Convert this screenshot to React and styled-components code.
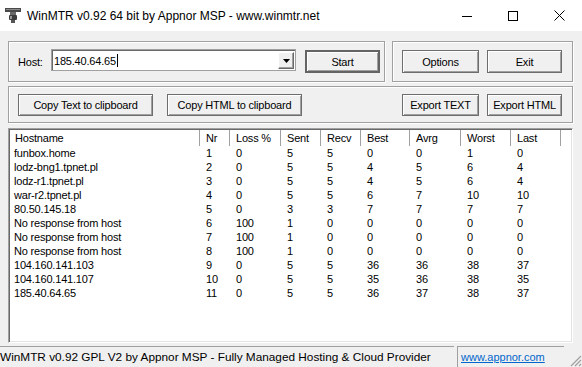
import React from 'react'
import styled, { createGlobalStyle } from 'styled-components'

const GlobalStyle = createGlobalStyle`
  html, body {
    margin: 0;
    padding: 0;
    background: #f0f0f0;
  }
  body {
    font-family: "Liberation Sans", Arial, sans-serif;
    font-size: 11px;
    letter-spacing: -0.2px;
    color: #000;
  }
`

const COLS = '190px 30px 51px 40px 40px 49px 51px 50px 50px 1fr'

const Window = styled.div`
  width: 582px;
  height: 367px;
  display: flex;
  flex-direction: column;
  background: #f0f0f0;
  overflow: hidden;
`

const TitleBar = styled.div`
  height: 31px;
  flex-shrink: 0;
  background: #fff;
  display: flex;
  align-items: center;
`

const AppIcon = styled.svg`
  margin: 0 6px 2px 5px;
  flex-shrink: 0;
`

const Title = styled.div`
  flex: 1;
  font-family: "Liberation Sans", Arial, sans-serif;
  font-size: 12px;
  letter-spacing: 0;
  color: #000;
`

const CaptionButton = styled.div`
  width: 46px;
  height: 31px;
  display: flex;
  align-items: center;
  justify-content: center;
`

const Body = styled.div`
  display: flex;
  flex-direction: column;
  padding: 10px 9px 0 8px;
`

const Row = styled.div`
  display: flex;
  margin-top: ${p => p.$gap || 0}px;
`

const GroupBox = styled.div`
  box-sizing: border-box;
  width: ${p => p.$width}px;
  height: ${p => p.$height}px;
  margin-left: ${p => p.$offset || 0}px;
  padding: ${p => p.$pad || '0'};
  border: 1px solid #a0a0a0;
  box-shadow: inset 1px 1px 0 #fff, 1px 1px 0 #fff;
  display: flex;
  align-items: center;
`

const Label = styled.span`
  width: 33px;
  flex-shrink: 0;
`

const Combo = styled.div`
  box-sizing: border-box;
  width: 245px;
  height: 22px;
  margin-top: -3px;
  border: 1px solid #a0a0a0;
  box-shadow: inset 1px 1px 0 #696969;
  background: #fff;
  display: flex;
  align-items: stretch;
  padding: 2px 1px 1px 2px;
`

const ComboText = styled.div`
  flex: 1;
  display: flex;
  align-items: center;
`

const Caret = styled.span`
  display: inline-block;
  width: 1px;
  height: 13px;
  background: #000;
  margin-left: 1px;
`

const ComboArrow = styled.div`
  box-sizing: border-box;
  width: 16px;
  background: #f0f0f0;
  border: 1px solid;
  border-color: #fff #696969 #696969 #fff;
  box-shadow: inset -1px -1px 0 #a0a0a0;
  display: flex;
  align-items: center;
  justify-content: center;
`

const Button = styled.div`
  box-sizing: border-box;
  width: ${p => p.$width}px;
  height: ${p => p.$height || 23}px;
  margin-left: ${p => p.$offset || 0}px;
  border: ${p => (p.$default ? '2px solid #646464' : '1px solid #6d6d6d')};
  box-shadow: inset 1px 1px 0 #fff, inset -1px -1px 0 #a0a0a0;
  background: #f0f0f0;
  display: flex;
  align-items: center;
  justify-content: center;
  white-space: nowrap;
`

const Spacer = styled.div`
  flex: 1;
`

const ListView = styled.div`
  box-sizing: border-box;
  width: 565px;
  height: 215px;
  margin-top: 5px;
  border: 1px solid;
  border-color: #a0a0a0 #fff #fff #a0a0a0;
  box-shadow: inset 1px 1px 0 #696969, inset -1px -1px 0 #e3e3e3;
  background: #fff;
  padding: 1px;
  overflow: hidden;
`

const HeaderRow = styled.div`
  display: grid;
  grid-template-columns: ${COLS};
  height: 16px;
`

const HeaderCell = styled.div`
  display: flex;
  align-items: center;
  padding-left: ${p => (p.$first ? 5 : 6)}px;
  border-right: ${p => (p.$last ? 'none' : '1px solid #a0a0a0')};
  white-space: nowrap;
  overflow: hidden;
`

const DataRow = styled.div`
  display: grid;
  grid-template-columns: ${COLS};
  height: 14px;
  line-height: 14px;
`

const Cell = styled.div`
  padding-left: ${p => (p.$first ? 4 : 6)}px;
  white-space: nowrap;
  overflow: hidden;
`

const StatusBar = styled.div`
  margin-top: 3px;
  height: 21px;
  display: flex;
  font-family: "Liberation Sans", Arial, sans-serif;
  font-size: 11.8px;
  letter-spacing: 0;
`

const StatusPanel = styled.div`
  box-sizing: border-box;
  width: ${p => p.$width}px;
  margin-left: ${p => p.$offset || 0}px;
  padding-left: ${p => p.$pad || 0}px;
  border-top: 1px solid #a0a0a0;
  border-left: 1px solid #a0a0a0;
  display: flex;
  align-items: center;
  white-space: nowrap;
  overflow: hidden;
`

const Link = styled.span`
  color: #0066cc;
  font-size: 11px;
  text-decoration: underline;
`

const Grip = styled.svg`
  align-self: flex-end;
  margin-left: auto;
`

const columns = ['Hostname', 'Nr', 'Loss %', 'Sent', 'Recv', 'Best', 'Avrg', 'Worst', 'Last']

const rows = [
  ['funbox.home', 1, 0, 5, 5, 0, 0, 1, 0],
  ['lodz-bng1.tpnet.pl', 2, 0, 5, 5, 4, 5, 6, 4],
  ['lodz-r1.tpnet.pl', 3, 0, 5, 5, 4, 5, 6, 4],
  ['war-r2.tpnet.pl', 4, 0, 5, 5, 6, 7, 10, 10],
  ['80.50.145.18', 5, 0, 3, 3, 7, 7, 7, 7],
  ['No response from host', 6, 100, 1, 0, 0, 0, 0, 0],
  ['No response from host', 7, 100, 1, 0, 0, 0, 0, 0],
  ['No response from host', 8, 100, 1, 0, 0, 0, 0, 0],
  ['104.160.141.103', 9, 0, 5, 5, 36, 36, 38, 37],
  ['104.160.141.107', 10, 0, 5, 5, 35, 36, 38, 35],
  ['185.40.64.65', 11, 0, 5, 5, 36, 37, 38, 37],
]

function WinMtrIcon() {
  return (
    <AppIcon width="16" height="16" viewBox="0 0 16 16">
      <rect x="0" y="1" width="16" height="4" fill="#4a4a4a" />
      <rect x="1" y="2" width="14" height="1" fill="#8a8a8a" />
      <rect x="5" y="5" width="6" height="3" fill="#6a6a6a" />
      <rect x="4" y="8" width="8" height="5" rx="1" fill="#3c3c3c" />
      <rect x="5" y="9" width="2" height="3" fill="#9a9a9a" />
      <rect x="6" y="13" width="4" height="3" fill="#555" />
    </AppIcon>
  )
}

export default function App() {
  return (
    <Window>
      <GlobalStyle />
      <TitleBar>
        <WinMtrIcon />
        <Title>WinMTR v0.92 64 bit by Appnor MSP - www.winmtr.net</Title>
        <CaptionButton>
          <svg width="10" height="10" viewBox="0 0 10 10">
            <line x1="0" y1="5.5" x2="10" y2="5.5" stroke="#000" strokeWidth="1" />
          </svg>
        </CaptionButton>
        <CaptionButton>
          <svg width="10" height="10" viewBox="0 0 10 10">
            <rect x="0.5" y="0.5" width="9" height="9" fill="none" stroke="#000" strokeWidth="1" />
          </svg>
        </CaptionButton>
        <CaptionButton>
          <svg width="11" height="11" viewBox="0 0 11 11">
            <path d="M0.5 0.5 L10.5 10.5 M10.5 0.5 L0.5 10.5" stroke="#000" strokeWidth="1" />
          </svg>
        </CaptionButton>
      </TitleBar>

      <Body>
        <Row>
          <GroupBox $width={377} $height={41} $pad="0 0 0 9px">
            <Label>Host:</Label>
            <Combo>
              <ComboText>
                185.40.64.65
                <Caret />
              </ComboText>
              <ComboArrow>
                <svg width="7" height="4" viewBox="0 0 7 4">
                  <path d="M0 0 H7 L3.5 4 Z" fill="#000" />
                </svg>
              </ComboArrow>
            </Combo>
            <Button $width={75} $offset={9} $default>Start</Button>
          </GroupBox>
          <GroupBox $width={181} $height={41} $offset={7} $pad="0 0 0 9px">
            <Button $width={77}>Options</Button>
            <Button $width={75} $offset={8}>Exit</Button>
          </GroupBox>
        </Row>

        <Row $gap={4}>
          <GroupBox $width={565} $height={37} $pad="0 10px 0 9px">
            <Button $width={135} $height={22}>Copy Text to clipboard</Button>
            <Button $width={135} $height={22} $offset={14}>Copy HTML to clipboard</Button>
            <Spacer />
            <Button $width={77} $height={22}>Export TEXT</Button>
            <Button $width={75} $height={22} $offset={8}>Export HTML</Button>
          </GroupBox>
        </Row>

        <ListView>
          <HeaderRow>
            {columns.map((c, i) => (
              <HeaderCell key={c} $first={i === 0}>{c}</HeaderCell>
            ))}
            <HeaderCell $last />
          </HeaderRow>
          {rows.map((r, i) => (
            <DataRow key={i}>
              {r.map((v, j) => (
                <Cell key={j} $first={j === 0}>{v}</Cell>
              ))}
            </DataRow>
          ))}
        </ListView>
      </Body>

      <StatusBar>
        <StatusPanel $width={456} $offset={-2} $pad={1}>
          WinMTR v0.92 GPL V2 by Appnor MSP - Fully Managed Hosting &amp; Cloud Provider
        </StatusPanel>
        <StatusPanel $width={107} $offset={3} $pad={3}>
          <Link>www.appnor.com</Link>
        </StatusPanel>
        <Grip width="14" height="14" viewBox="0 0 14 14">
          <path d="M13 3 L3 13 M13 7 L7 13 M13 11 L11 13" stroke="#a0a0a0" strokeWidth="1.2" />
        </Grip>
      </StatusBar>
    </Window>
  )
}
